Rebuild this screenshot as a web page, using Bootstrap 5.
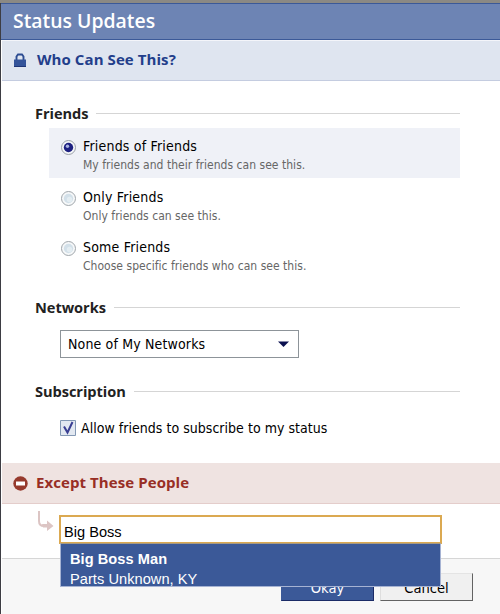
<!DOCTYPE html>
<html lang="en">
<head>
<meta charset="utf-8">
<meta name="viewport" content="width=device-width, initial-scale=1">
<title>Status Updates</title>
<link rel="stylesheet" href="https://cdn.jsdelivr.net/npm/bootstrap@5.3.0/dist/css/bootstrap.min.css">
<style>
body{font-family:"DejaVu Sans Condensed","DejaVu Sans",sans-serif;font-stretch:condensed;font-size:14px;line-height:16px;color:#000;background:#fff;height:614px;overflow:hidden}
.page-strip{height:3px;background:#8b8984}
.dialog-box{height:611px;border-left:1px solid #3d3d43}
.dialog-title{height:37px;background:#6d84b4;border-top:1px solid #3b5998;border-bottom:1px solid #3b5998;padding:0 0 1px 12px;font-family:"Open Sans",sans-serif;font-stretch:normal;font-size:19.4px;font-weight:600;line-height:20px;color:#fff}
.band{margin-left:1px;padding-left:11px;font-family:"Open Sans",sans-serif;font-stretch:normal;font-weight:700;font-size:15px;letter-spacing:.08px}
.band svg{flex:none}
.band span{position:relative;top:-1px}
.band-who{height:41px;background:#dfe5f0;border-top:1px solid #f4f5fa;border-bottom:1px solid #c4cce0;color:#233e8b;padding-bottom:1px}
.band-who svg{margin-left:1px}
.band-who span{margin-left:11px}
.band-except{height:41px;background:#efe3e1;border-bottom:1px solid #e4cdcb;color:#982e25}
.settings{height:382px;padding:23px 40px 0 34px}
.legend-row{height:17px;font-family:"Open Sans",sans-serif;font-stretch:normal;font-weight:700;font-size:14.6px;color:#222}
.legend-row i{height:1px;margin-top:2px;background:#d5d5d5}
.legend-row span{letter-spacing:-.05px}
.legend-net{margin-top:19px}
.legend-sub{margin-top:24px}
.choice{height:50px;margin-left:14px;padding:10px 0 0 11px}
.choice.is-on{background:#eff1f7;margin-top:7px}
.is-on + .choice{margin-top:1px}
.choice-name{letter-spacing:.2px}
.hint{font-size:12px;color:#666;margin-top:3px;letter-spacing:.03px}
.dot{width:17px;height:17px;flex:none;margin-right:6px}
.net-select{width:239px;height:28px;margin:15px 0 0 25px;border:1px solid #8d9499;padding:0 9px 0 7px}
.net-select span{letter-spacing:.15px}
.subscribe{margin:20px 0 0 24px}
.subscribe span{letter-spacing:.03px}
.people{height:55px;margin-left:1px;border-bottom:1px solid #d6d6d6}
.people-input{position:absolute;left:57px;top:11px;width:383px;height:29px;border:2px solid #dba951;background:#fff;padding:7px 0 0 3px}
.finder-font{font-family:"Liberation Sans",Arial,sans-serif;font-stretch:normal;font-size:14.6px}
.people-menu{position:absolute;z-index:3;left:58px;top:39px;width:381px;height:44px;background:#3b5998;border:1px solid #a6b3d3;border-top-color:#a89a80;padding:5px 0 0 9px;color:#fff;line-height:20px;letter-spacing:.05px}
.arrow{position:absolute;left:36px;top:7px}
.dialog-foot{height:55px;margin-left:1px;background:#f7f7f7;padding:14px 27px 0 0}
.act{width:93px;height:28px;border-radius:0;padding:1px 0 0;line-height:26px;font-size:14.6px}
.act-ok,.act-ok:hover{background:#3b5998;border:1px solid;border-color:#d9dfea #1b2b66 #1b2b66 #3b5998;color:#fff}
.act-no,.act-no:hover{background:#f0f0f0;border:1px solid;border-color:#e4e4e4 #636363 #636363 #dedede;color:#000}
.gap-acts{gap:6px}
</style>
<script src="https://cdn.jsdelivr.net/npm/bootstrap@5.3.0/dist/js/bootstrap.bundle.min.js"></script>
</head>
<body>
<div class="page-strip"></div>
<main class="dialog-box">
  <h1 class="dialog-title d-flex align-items-center m-0">Status Updates</h1>
  <h2 class="band band-who d-flex align-items-center mb-0">
    <svg width="12" height="15" viewBox="0 0 12 15"><path d="M2.500 7V3.500l1.500-2h4l1.500 2V7" fill="none" stroke="#2d4c92" stroke-width="1.900"/><path d="M0 6.500h12V14H0z" fill="#34549a"/><path d="M0 13h12v1H0z" fill="#1e3577"/></svg>
    <span>Who Can See This?</span>
  </h2>
  <form class="settings">
    <div class="legend-row d-flex align-items-center"><span>Friends</span><i class="flex-grow-1 ms-2"></i></div>
    <div class="choice is-on d-flex">
      <svg class="dot" viewBox="0 0 17 17"><circle cx="8.500" cy="9.500" r="7" fill="#f4f6f8" stroke="#9aa0a8"/><circle cx="8.500" cy="9.500" r="4.700" fill="#1d2080"/><circle cx="7.500" cy="8.300" r="1.700" fill="#aab4e0"/></svg>
      <div><div class="choice-name">Friends of Friends</div><div class="hint">My friends and their friends can see this.</div></div>
    </div>
    <div class="choice d-flex">
      <svg class="dot" viewBox="0 0 17 17"><circle cx="8.500" cy="9.500" r="7" fill="#f6f8f9" stroke="#a0a6ab"/><circle cx="8.500" cy="9.500" r="4.700" fill="#d3e0e9"/><circle cx="9.500" cy="10.500" r="2.700" fill="#e4edf2"/></svg>
      <div><div class="choice-name">Only Friends</div><div class="hint">Only friends can see this.</div></div>
    </div>
    <div class="choice d-flex">
      <svg class="dot" viewBox="0 0 17 17"><circle cx="8.500" cy="9.500" r="7" fill="#f6f8f9" stroke="#a0a6ab"/><circle cx="8.500" cy="9.500" r="4.700" fill="#d3e0e9"/><circle cx="9.500" cy="10.500" r="2.700" fill="#e4edf2"/></svg>
      <div><div class="choice-name">Some Friends</div><div class="hint">Choose specific friends who can see this.</div></div>
    </div>
    <div class="legend-row legend-net d-flex align-items-center"><span>Networks</span><i class="flex-grow-1 ms-2"></i></div>
    <div class="net-select d-flex align-items-center justify-content-between"><span>None of My Networks</span><svg width="11" height="6" viewBox="0 0 11 6"><path d="M0 .5h11L5.500 6z" fill="#0c1150"/></svg></div>
    <div class="legend-row legend-sub d-flex align-items-center"><span>Subscription</span><i class="flex-grow-1 ms-2"></i></div>
    <div class="subscribe d-flex align-items-center">
      <svg class="me-1" width="18" height="18" viewBox="0 0 18 18"><path d="M1.500 1.500h15v15h-15z" fill="#e2e8f1" stroke="#8398b4"/><path d="M5 7.500l3.500 6 5-10.500" fill="none" stroke="#3a3f93" stroke-width="2"/></svg>
      <span>Allow friends to subscribe to my status</span>
    </div>
  </form>
  <h2 class="band band-except d-flex align-items-center mb-0">
    <svg width="15" height="15" viewBox="0 0 15 15"><circle cx="7.500" cy="7.500" r="7.200" fill="#963a2d"/><path d="M3 5.500h9v4H3z" fill="#fff"/></svg>
    <span class="ms-2">Except These People</span>
  </h2>
  <section class="people position-relative">
    <svg class="arrow" width="16" height="20" viewBox="0 0 16 20"><path d="M1 0v10q0 5 5 5h4" fill="none" stroke="#dcc5c4" stroke-width="2"/><path d="M4 13h5V9.500l6.500 5.500L9 20v-3.500H5z" fill="#dcc5c4"/></svg>
    <div class="people-input finder-font">Big Boss</div>
    <div class="people-menu finder-font"><div class="fw-bold">Big Boss Man</div><div>Parts Unknown, KY</div></div>
  </section>
  <footer class="dialog-foot d-flex justify-content-end gap-acts">
    <button type="button" class="btn act act-ok">Okay</button>
    <button type="button" class="btn act act-no">Cancel</button>
  </footer>
</main>
</body>
</html>
